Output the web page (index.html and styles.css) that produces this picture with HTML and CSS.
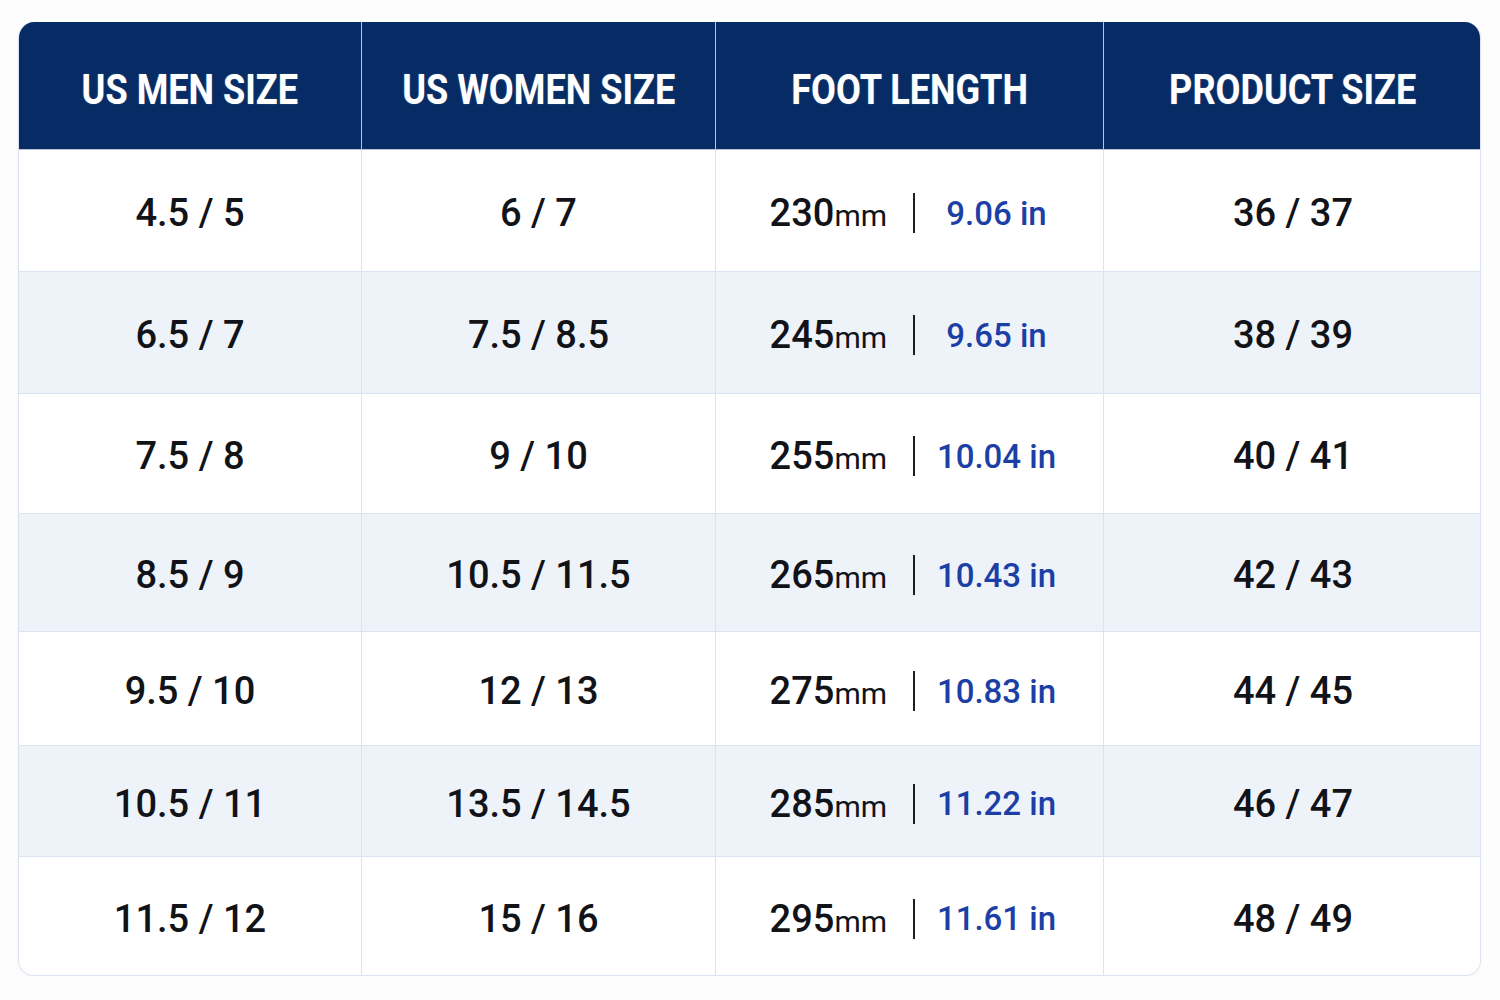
FILE: index.html
```html
<!DOCTYPE html>
<html lang="en">
<head>
<meta charset="utf-8">
<title>Size Chart</title>
<link rel="stylesheet" href="styles.css">
</head>
<body>
<div class="chart">
  <div class="th"><span class="ht">US MEN SIZE</span></div>
  <div class="th"><span class="ht">US WOMEN SIZE</span></div>
  <div class="th"><span class="ht">FOOT LENGTH</span></div>
  <div class="th last"><span class="ht">PRODUCT SIZE</span></div>

  <div class="td">4.5 / 5</div>
  <div class="td">6 / 7</div>
  <div class="td foot"><span class="mm">230<small>mm</small></span><span class="bar"></span><span class="in">9.06 in</span></div>
  <div class="td last">36 / 37</div>

  <div class="td alt">6.5 / 7</div>
  <div class="td alt">7.5 / 8.5</div>
  <div class="td alt foot"><span class="mm">245<small>mm</small></span><span class="bar"></span><span class="in">9.65 in</span></div>
  <div class="td alt last">38 / 39</div>

  <div class="td">7.5 / 8</div>
  <div class="td">9 / 10</div>
  <div class="td foot"><span class="mm">255<small>mm</small></span><span class="bar"></span><span class="in">10.04 in</span></div>
  <div class="td last">40 / 41</div>

  <div class="td alt">8.5 / 9</div>
  <div class="td alt">10.5 / 11.5</div>
  <div class="td alt foot"><span class="mm">265<small>mm</small></span><span class="bar"></span><span class="in">10.43 in</span></div>
  <div class="td alt last">42 / 43</div>

  <div class="td">9.5 / 10</div>
  <div class="td">12 / 13</div>
  <div class="td foot"><span class="mm">275<small>mm</small></span><span class="bar"></span><span class="in">10.83 in</span></div>
  <div class="td last">44 / 45</div>

  <div class="td alt">10.5 / 11</div>
  <div class="td alt">13.5 / 14.5</div>
  <div class="td alt foot"><span class="mm">285<small>mm</small></span><span class="bar"></span><span class="in">11.22 in</span></div>
  <div class="td alt last">46 / 47</div>

  <div class="td bottom">11.5 / 12</div>
  <div class="td bottom">15 / 16</div>
  <div class="td bottom foot"><span class="mm">295<small>mm</small></span><span class="bar"></span><span class="in">11.61 in</span></div>
  <div class="td bottom last">48 / 49</div>
</div>
</body>
</html>
```

FILE: styles.css
```css
* { box-sizing: border-box; }

html, body {
  margin: 0;
  padding: 0;
  background: #fdfdfe;
}

body {
  padding: 22px 0 0 18px;
  font-family: "Roboto", "Noto Sans", sans-serif;
}

.chart {
  width: 1463px;
  display: grid;
  grid-template-columns: 343px 354px 388px 378px;
  grid-template-rows: 128px 122px 122px 120px 118px 114px 111px 118px;
  border: 1px solid #dbe3ef;
  border-top: none;
  border-radius: 16px;
  overflow: hidden;
  background: #ffffff;
  box-shadow: 0 1px 3px rgba(20, 40, 90, 0.05);
}

.th {
  background: #072c65;
  color: #ffffff;
  display: flex;
  align-items: center;
  justify-content: center;
  padding-top: 7px;
  border-right: 1px solid #b9c3d8;
  border-bottom: 1px solid #b9c3d8;
}

.ht {
  display: inline-block;
  font-family: "Roboto", sans-serif;
  font-weight: 700;
  font-size: 42px;
  transform: scaleX(0.86);
  white-space: nowrap;
  text-shadow: 0 0 2px rgba(255, 255, 255, 0.2);
}

.td {
  display: flex;
  align-items: center;
  justify-content: center;
  padding-top: 5px;
  font-family: "Roboto", sans-serif;
  font-weight: 500;
  font-size: 38px;
  color: #111318;
  background: #ffffff;
  border-right: 1px solid #dbe3ef;
  border-bottom: 1px solid #dbe3ef;
  white-space: nowrap;
}

.td.alt { background: #eef3fa; }
.last { border-right: none; }
.bottom { border-bottom: none; }

.td.foot {
  display: grid;
  grid-template-columns: 197px 2px 1fr;
  align-items: center;
  justify-content: stretch;
}

.mm {
  justify-self: end;
  padding-right: 26px;
}

.mm small {
  font-size: 30px;
  font-weight: 400;
}

.bar {
  width: 2px;
  height: 40px;
  background: #1b1d22;
}

.in {
  justify-self: stretch;
  text-align: center;
  padding-right: 25px;
  color: #1c3fa6;
  font-size: 33px;
}
```
